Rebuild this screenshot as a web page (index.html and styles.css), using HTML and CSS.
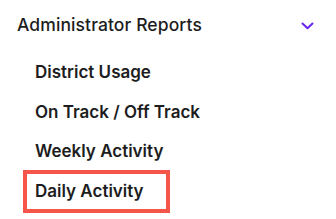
FILE: index.html
```html
<!DOCTYPE html>
<html lang="en">
<head>
    <meta charset="UTF-8">
    <meta name="viewport" content="width=device-width, initial-scale=1.0">
    <title>Administrator Reports</title>
    <link rel="stylesheet" href="styles.css">
</head>
<body>
    <div class="menu">
        <div class="menu-header">
            <span class="menu-title">Administrator Reports</span>
            <svg class="chevron" width="13" height="8" viewBox="0 0 13 8">
                <path d="M1.5 1.5 L6.5 6.2 L11.5 1.5" fill="none" stroke="#6a24f0" stroke-width="2" stroke-linecap="round" stroke-linejoin="round"/>
            </svg>
        </div>
        <ul class="menu-list">
            <li class="menu-item">District Usage</li>
            <li class="menu-item">On Track / Off Track</li>
            <li class="menu-item">Weekly Activity</li>
            <li class="menu-item highlight">Daily Activity</li>
        </ul>
    </div>
</body>
</html>
```

FILE: styles.css
```css
body {
    margin: 0;
    background-color: #ffffff;
    font-family: Inter, "Noto Sans", sans-serif;
    color: #1d1d21;
}

.menu {
    width: 336px;
}

.menu-header {
    display: flex;
    justify-content: space-between;
    align-items: center;
    height: 48px;
    padding: 0 22px 0 17px;
}

.menu-title {
    font-size: 17.5px;
    font-weight: 500;
    letter-spacing: 0.1px;
}

.chevron {
    margin-top: 4px;
}

.menu-list {
    list-style: none;
    margin: 0;
    padding: 5px 0 0 23px;
}

.menu-item {
    display: block;
    width: fit-content;
    box-sizing: border-box;
    height: 39.5px;
    line-height: 31.5px;
    padding: 0 11px 0 8px;
    border: 4px solid transparent;
    font-size: 17px;
    font-weight: 600;
}

.highlight {
    margin-top: -2px;
    border-color: #f6564a;
    height: 43px;
    line-height: 35px;
    padding-right: 22px;
}
```
